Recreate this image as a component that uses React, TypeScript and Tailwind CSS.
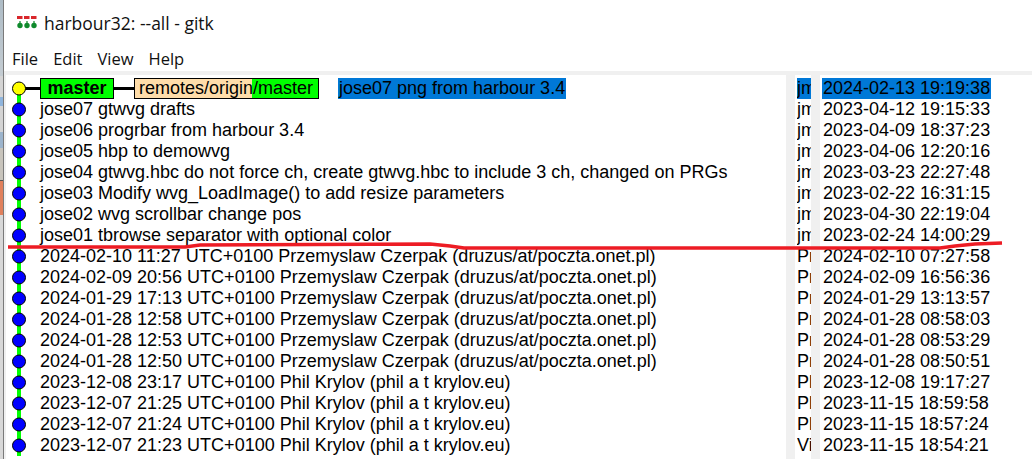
const commits = [
  "jose07 gtwvg drafts",
  "jose06 progrbar from harbour 3.4",
  "jose05 hbp to demowvg",
  "jose04 gtwvg.hbc do not force ch, create gtwvg.hbc to include 3 ch, changed on PRGs",
  "jose03 Modify wvg_LoadImage() to add resize parameters",
  "jose02 wvg scrollbar change pos",
  "jose01 tbrowse separator with optional color",
  "2024-02-10 11:27 UTC+0100 Przemyslaw Czerpak (druzus/at/poczta.onet.pl)",
  "2024-02-09 20:56 UTC+0100 Przemyslaw Czerpak (druzus/at/poczta.onet.pl)",
  "2024-01-29 17:13 UTC+0100 Przemyslaw Czerpak (druzus/at/poczta.onet.pl)",
  "2024-01-28 12:58 UTC+0100 Przemyslaw Czerpak (druzus/at/poczta.onet.pl)",
  "2024-01-28 12:53 UTC+0100 Przemyslaw Czerpak (druzus/at/poczta.onet.pl)",
  "2024-01-28 12:50 UTC+0100 Przemyslaw Czerpak (druzus/at/poczta.onet.pl)",
  "2023-12-08 23:17 UTC+0100 Phil Krylov (phil a t krylov.eu)",
  "2023-12-07 21:25 UTC+0100 Phil Krylov (phil a t krylov.eu)",
  "2023-12-07 21:24 UTC+0100 Phil Krylov (phil a t krylov.eu)",
  "2023-12-07 21:23 UTC+0100 Phil Krylov (phil a t krylov.eu)",
];

const authors = [
  "jm", "jm", "jm", "jm", "jm", "jm", "jm", "jm",
  "Pr", "Pr", "Pr", "Pr", "Pr", "Pr",
  "Ph", "Ph", "Ph", "Vi",
];

const dates = [
  "2024-02-13 19:19:38",
  "2023-04-12 19:15:33",
  "2023-04-09 18:37:23",
  "2023-04-06 12:20:16",
  "2023-03-23 22:27:48",
  "2023-02-22 16:31:15",
  "2023-04-30 22:19:04",
  "2023-02-24 14:00:29",
  "2024-02-10 07:27:58",
  "2024-02-09 16:56:36",
  "2024-01-29 13:13:57",
  "2024-01-28 08:58:03",
  "2024-01-28 08:53:29",
  "2024-01-28 08:50:51",
  "2023-12-08 19:17:27",
  "2023-11-15 18:59:58",
  "2023-11-15 18:57:24",
  "2023-11-15 18:54:21",
];

function GraphNode({ head = false }: { head?: boolean }) {
  return (
    <svg width="34" height="21" viewBox="0 0 34 21" className="shrink-0 block">
      <line x1="13" y1={head ? 10 : 0} x2="13" y2="21" stroke="#00ff00" strokeWidth="4" />
      {head && <line x1="13" y1="10.5" x2="34" y2="10.5" stroke="#000" strokeWidth="3" />}
      <circle cx="13" cy="10.5" r="6.5" fill={head ? "#ffff00" : "#0000ff"} stroke="#000" strokeWidth="1" />
    </svg>
  );
}

function AppIcon() {
  return (
    <svg width="20" height="14" viewBox="0 0 20 14" className="block">
      <rect x="0" y="0" width="5.5" height="3" fill="#d9262b" />
      <rect x="7" y="0" width="5.5" height="3" fill="#d9262b" />
      <rect x="14" y="0" width="5.5" height="3" fill="#d9262b" />
      <circle cx="3" cy="9.5" r="2.7" fill="#0f8a2c" />
      <circle cx="10" cy="9.5" r="2.7" fill="#0f8a2c" />
      <circle cx="17" cy="9.5" r="2.7" fill="#0f8a2c" />
      <rect x="2.4" y="5" width="1.2" height="2" fill="#0f8a2c" />
      <rect x="9.4" y="5" width="1.2" height="2" fill="#0f8a2c" />
      <rect x="16.4" y="5" width="1.2" height="2" fill="#0f8a2c" />
    </svg>
  );
}

function LeftEdge() {
  return (
    <div className="flex flex-col w-[3px] h-full shrink-0">
      <div className="h-[76px] bg-gradient-to-b from-[#aebcc6] to-[#c4ccd2]" />
      <div className="h-[21px] bg-[#d4d4d4]" />
      <div className="h-[9px] bg-[#8fb4dc]" />
      <div className="h-[26px] bg-[#d4d4d4]" />
      <div className="h-[16px] bg-[#9cb4cc]" />
      <div className="h-[32px] bg-[#c8c4bc]" />
      <div className="h-[1px] bg-[#555555]" />
      <div className="h-[34px] bg-[#e0805c]" />
      <div className="flex-1 bg-[#d8d8d8]" />
    </div>
  );
}

export default function App() {
  return (
    <div className="relative flex h-screen overflow-hidden bg-white text-black font-['Liberation_Sans',Arial,sans-serif] text-[18px] leading-[21px]">
      <LeftEdge />
      <div className="w-[1px] bg-[#7a7a7a] shrink-0" />
      <div className="flex-1 min-w-0">
        <div className="flex h-[45px] items-center pl-[13px] pt-[1px]">
          <AppIcon />
          <span className="ml-[7px] text-[17.5px] text-[#111] font-['Open_Sans',sans-serif]">harbour32: --all - gitk</span>
        </div>
        <div className="flex h-[26px] items-center pl-[8px] gap-[15px] text-[16.5px] font-['Open_Sans',sans-serif] text-[#111]">
          <span>File</span>
          <span>Edit</span>
          <span>View</span>
          <span>Help</span>
        </div>
        <div className="h-[4px] bg-[#f0f0f0]" />
        <div className="flex h-[384px] pl-[2px] bg-[#f0f0f0]">
          <div className="w-[780px] bg-white pt-[3px] shrink-0">
            <div className="flex h-[21px] items-stretch">
              <GraphNode head />
              <div className="w-[74px] h-[21px] flex items-center justify-center bg-[#00ff00] border border-black font-bold">master</div>
              <div className="w-[20px] h-[3px] bg-black self-center" />
              <div className="w-[185px] h-[21px] flex bg-[#00ff00] border border-black pl-[4px] overflow-hidden relative">
                <span className="absolute left-0 top-0 bottom-0 w-[117px] bg-[#ffddaa]" />
                <span className="relative leading-[19px] whitespace-nowrap">remotes/origin/master</span>
              </div>
              <span className="ml-[19px] bg-[#0078d7] px-[1px] h-[21px] whitespace-nowrap">jose07 png from harbour 3.4</span>
            </div>
            {commits.map((text) => (
              <div key={text} className="flex h-[21px]">
                <GraphNode />
                <span className="whitespace-nowrap">{text}</span>
              </div>
            ))}
          </div>
          <div className="w-[9px] shrink-0" />
          <div className="w-[16px] bg-white pt-[3px] pl-[2px] shrink-0">
            {authors.map((a, i) => (
              <div key={i} className={"h-[21px] w-[14px] overflow-hidden whitespace-nowrap " + (i === 0 ? "bg-[#0078d7]" : "")}>{a}</div>
            ))}
          </div>
          <div className="w-[9px] shrink-0" />
          <div className="flex-1 bg-white pt-[3px] pl-[2px]">
            {dates.map((d, i) => (
              <div key={d} className="h-[21px]">
                <span className={"inline-block h-[21px] px-[1px] " + (i === 0 ? "bg-[#0078d7]" : "")}>{d}</span>
              </div>
            ))}
          </div>
        </div>
      </div>
      <svg width="1032" height="459" viewBox="0 0 1032 459" className="absolute left-0 top-0 pointer-events-none">
        <polyline
          points="8,247 185,247 200,245 430,244 450,246 464,248 940,248 955,246 975,244 1002,243"
          fill="none"
          stroke="#ed1c24"
          strokeWidth="3.5"
        />
      </svg>
    </div>
  );
}
